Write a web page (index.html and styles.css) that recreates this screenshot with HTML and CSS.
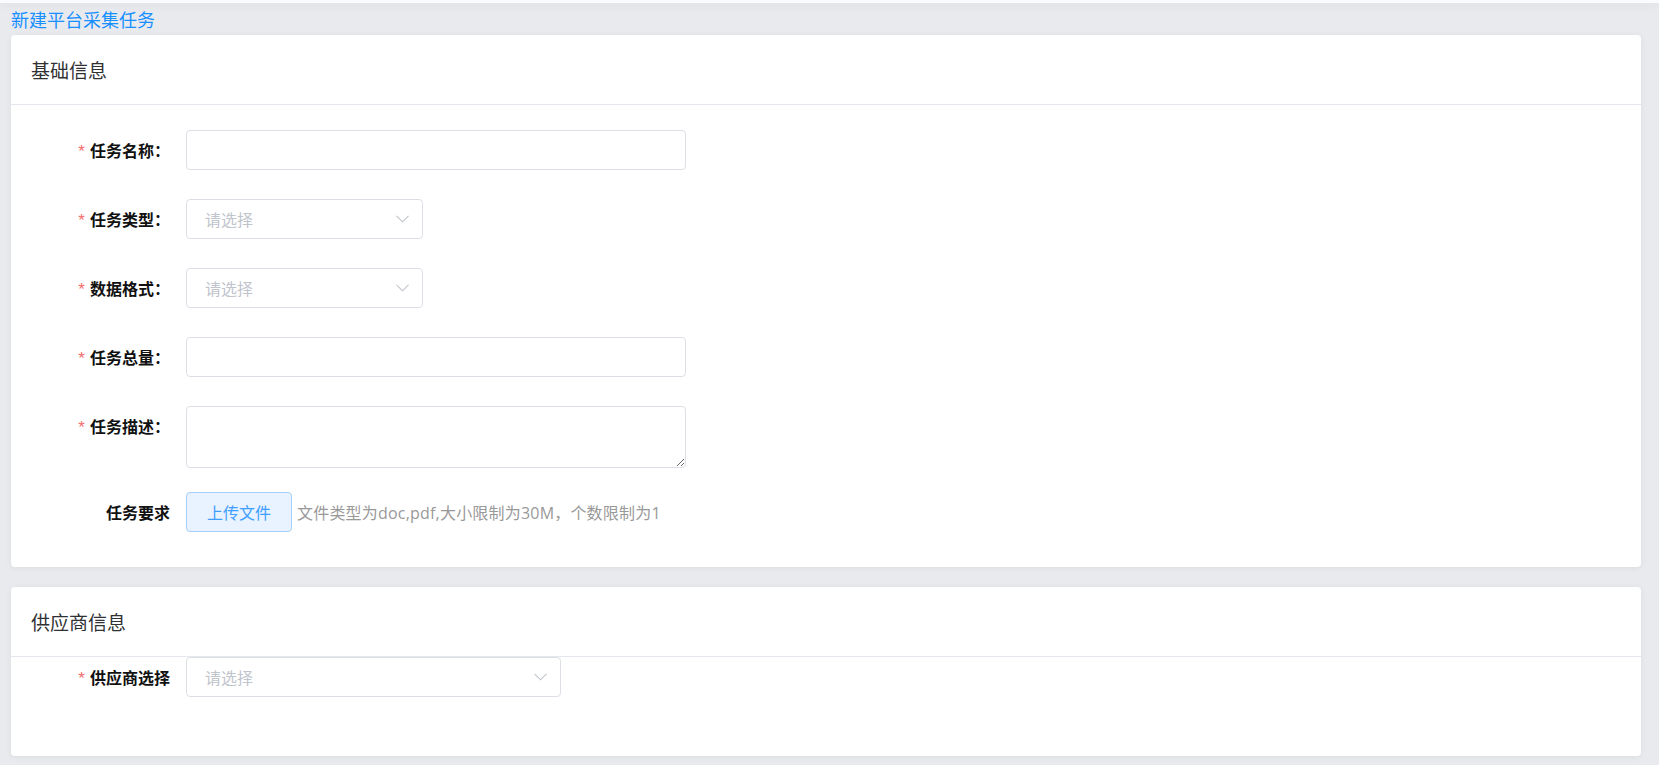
FILE: index.html
```html
<!DOCTYPE html>
<html lang="zh-CN">
<head>
    <meta charset="UTF-8">
    <meta name="viewport" content="width=device-width, initial-scale=1.0">
    <title>新建平台采集任务</title>
    <link rel="stylesheet" href="styles.css">
</head>
<body>
    <!-- Thin bar left over from the page header -->
    <div class="top-bar"></div>

    <div class="page">
        <div class="page-title">新建平台采集任务</div>

        <!-- Basic info card -->
        <div class="card">
            <div class="card-header">基础信息</div>
            <div class="card-body">
                <div class="form-item">
                    <label class="form-label required">任务名称：</label>
                    <input class="input input-long" type="text">
                </div>
                <div class="form-item">
                    <label class="form-label required">任务类型：</label>
                    <div class="select select-short">
                        <span class="select-placeholder">请选择</span>
                        <svg class="select-arrow" width="13" height="8" viewBox="0 0 13 8"><polyline points="0.5,0.8 6.5,6.8 12.5,0.8" fill="none" stroke="#c0c4cc" stroke-width="1.1"/></svg>
                    </div>
                </div>
                <div class="form-item">
                    <label class="form-label required">数据格式：</label>
                    <div class="select select-short">
                        <span class="select-placeholder">请选择</span>
                        <svg class="select-arrow" width="13" height="8" viewBox="0 0 13 8"><polyline points="0.5,0.8 6.5,6.8 12.5,0.8" fill="none" stroke="#c0c4cc" stroke-width="1.1"/></svg>
                    </div>
                </div>
                <div class="form-item">
                    <label class="form-label required">任务总量：</label>
                    <input class="input input-long" type="text">
                </div>
                <div class="form-item form-item-textarea">
                    <label class="form-label required">任务描述：</label>
                    <textarea class="textarea"></textarea>
                </div>
                <div class="form-item form-item-last">
                    <label class="form-label">任务要求</label>
                    <button class="upload-button" type="button">上传文件</button>
                    <span class="upload-tip">文件类型为doc,pdf,大小限制为30M，个数限制为1</span>
                </div>
            </div>
        </div>

        <!-- Supplier card -->
        <div class="card">
            <div class="card-header">供应商信息</div>
            <div class="card-body card-body-tight">
                <div class="form-item form-item-last">
                    <label class="form-label required">供应商选择</label>
                    <div class="select select-medium">
                        <span class="select-placeholder">请选择</span>
                        <svg class="select-arrow" width="13" height="8" viewBox="0 0 13 8"><polyline points="0.5,0.8 6.5,6.8 12.5,0.8" fill="none" stroke="#c0c4cc" stroke-width="1.1"/></svg>
                    </div>
                </div>
            </div>
        </div>
    </div>
</body>
</html>
```

FILE: styles.css
```css
/* Page base */
body {
    margin: 0;
    padding: 0;
    background: #e8eaee;
    font-family: "Noto Sans CJK SC", "Noto Sans", sans-serif;
    color: #303133;
    overflow: hidden;
}

.top-bar {
    height: 3px;
    background: #fafbfc;
    box-shadow: 0 2px 8px rgba(0, 0, 0, 0.08);
}

.page {
    padding: 0 18px 9px 11px;
}

.page-title {
    height: 32px;
    line-height: 32px;
    font-size: 18px;
    color: #1890ff;
}

/* Cards */
.card {
    background: #fff;
    border-radius: 4px;
    box-shadow: 0 1px 6px rgba(0, 0, 0, 0.06);
    margin-bottom: 20px;
}

.card:last-child {
    margin-bottom: 0;
}

.card-header {
    height: 69px;
    line-height: 69px;
    padding: 0 20px;
    font-size: 19px;
    color: #303133;
    border-bottom: 1px solid #e4e7ed;
}

.card-body {
    padding: 25px 20px 35px;
}

.card-body-tight {
    padding: 0 20px 59px;
}

/* Form rows */
.form-item {
    display: flex;
    align-items: center;
    margin-bottom: 29px;
}

.form-item-textarea {
    align-items: flex-start;
    margin-bottom: 24px;
}

.form-item-last {
    margin-bottom: 0;
}

.form-label {
    width: 139px;
    height: 40px;
    padding-right: 16px;
    text-align: right;
    font-size: 16px;
    font-weight: bold;
    line-height: 40px;
    color: #111;
    flex-shrink: 0;
}

.form-label.required::before {
    content: "*";
    font-family: "Liberation Sans", sans-serif;
    font-size: 17px;
    line-height: 0;
    color: #f56c6c;
    font-weight: normal;
    margin-right: 5px;
}

/* Inputs */
.input,
.textarea,
.select {
    box-sizing: border-box;
    border: 1px solid #dcdfe6;
    border-radius: 4px;
    background: #fff;
    font-family: inherit;
    font-size: 16px;
}

.input {
    height: 40px;
    padding: 0 18px;
    outline: none;
}

.input-long {
    width: 500px;
}

.textarea {
    display: block;
    width: 500px;
    height: 62px;
    padding: 5px 18px;
    outline: none;
}

.select {
    height: 40px;
    padding: 0 13px 0 18px;
    display: flex;
    align-items: center;
    justify-content: space-between;
}

.select-short {
    width: 237px;
}

.select-medium {
    width: 375px;
}

.select-placeholder {
    color: #c0c4cc;
    line-height: 1;
}

/* Upload */
.upload-button {
    height: 40px;
    padding: 0 20px;
    border: 1px solid #a3d0fd;
    border-radius: 4px;
    background: #e8f3ff;
    color: #409eff;
    font-family: inherit;
    font-size: 16px;
    cursor: pointer;
}

.upload-tip {
    margin-left: 5px;
    font-family: "Open Sans", "Noto Sans CJK SC", sans-serif;
    font-size: 16px;
    letter-spacing: 0.2px;
    color: #999;
}
```
